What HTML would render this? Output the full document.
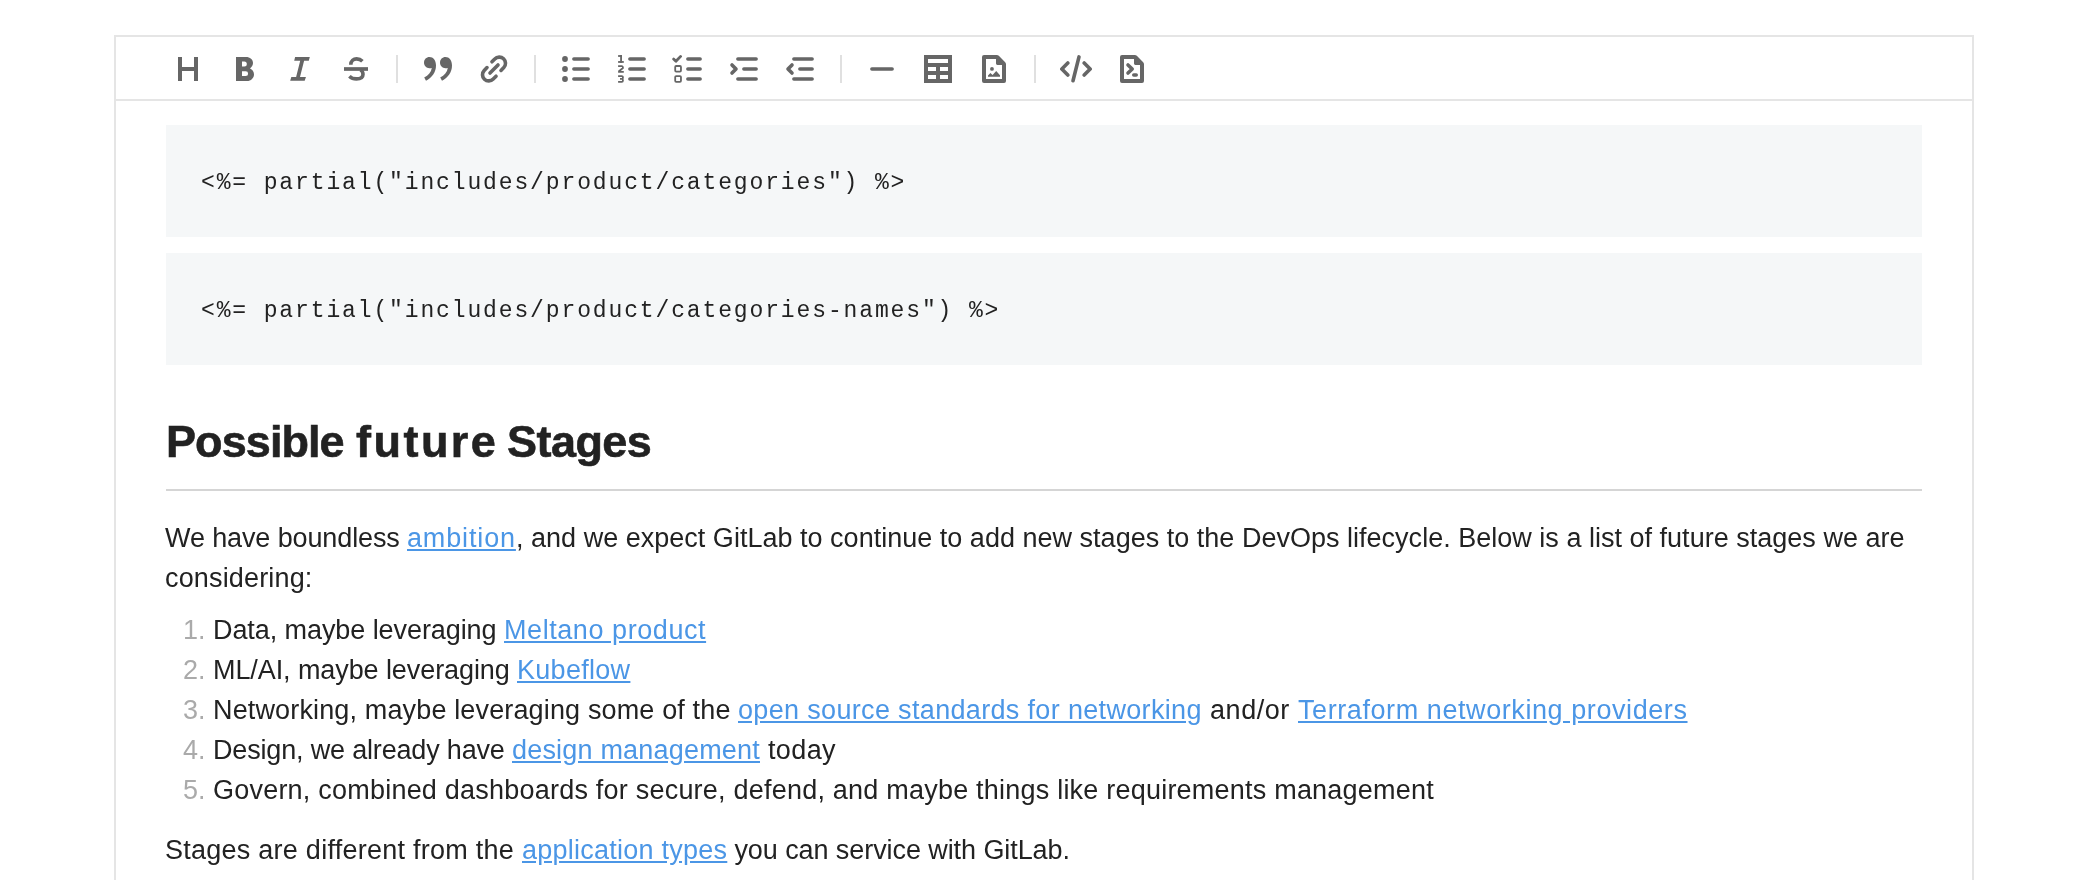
<!DOCTYPE html>
<html><head><meta charset="utf-8">
<style>
html,body{margin:0;padding:0;background:#fff;}
body{width:2083px;height:880px;overflow:hidden;position:relative;font-family:"Liberation Sans",sans-serif;}
.box{position:absolute;left:114px;top:35px;width:1860px;height:900px;box-sizing:border-box;border:2px solid #e5e5e5;}
.tbar{position:absolute;left:116px;top:99px;width:1856px;height:2px;background:#e5e5e5;}
.ic{position:absolute;top:53px;width:32px;height:32px;}
.ic svg{display:block;width:32px;height:32px;}
.dv{position:absolute;top:55px;width:2px;height:28px;background:#e0e0e0;}
.pre{position:absolute;left:166px;width:1756px;height:112px;background:#f5f7f8;}
.code{position:absolute;left:201px;font-family:"Liberation Mono",monospace;font-size:23px;letter-spacing:1.87px;line-height:40px;color:#222;white-space:pre;}
.t{position:absolute;white-space:pre;font-size:27px;line-height:40px;color:#222;}
.a{position:absolute;white-space:pre;font-size:27px;line-height:40px;color:#4b96e6;text-decoration:underline;}
.n{position:absolute;white-space:nowrap;font-size:27px;line-height:40px;color:#aaa;}
h2{position:absolute;margin:0;white-space:nowrap;font-size:45px;line-height:60px;font-weight:bold;color:#222;-webkit-text-stroke:0.6px #222;}
.t,.a,.n,.code,h2{will-change:transform;}
.hr{position:absolute;left:166px;top:489px;width:1756px;height:2px;background:#d5d5d5;}
</style></head><body>
<div class="box"></div>
<div class="tbar"></div>

<!-- toolbar icons -->
<div class="ic" style="left:172px"><svg viewBox="0 0 16 16" fill="#666"><path d="M3 2h2v5h6V2h2v12h-2V9H5v5H3z"/></svg></div>
<div class="ic" style="left:228px"><svg viewBox="0 0 16 16" fill="#666"><path fill-rule="evenodd" d="M4 2H9C11 2 12.5 3.2 12.5 5C12.5 6.1 11.9 7.1 11 7.7C12.2 8.2 13 9.3 13 10.6C13 12.5 11.5 14 9.5 14H4Z M7 4.3V6.8H8.15A1.25 1.25 0 0 0 8.15 4.3Z M7 9.15V11.55H8.85A1.2 1.2 0 0 0 8.85 9.15Z"/></svg></div>
<div class="ic" style="left:284px"><svg viewBox="0 0 16 16" fill="#666"><path d="M5.55 2H12.9L12.4 3.9H10.05L8 12.05H10.97L10.35 13.9H3.09L3.66 12.05H6.06L8.1 3.9H5.1Z"/></svg></div>
<div class="ic" style="left:340px"><svg viewBox="0 0 16 16" fill="none" stroke="#666" stroke-width="1.8"><path d="M2 8H14" stroke-width="1.85"/><path d="M5.4 5.9C5.4 3.9 6.8 2.95 8.3 2.95C9.6 2.95 10.5 3.4 11.2 4.1"/><path d="M10.2 8.5C11.2 9 11.5 9.8 11.5 10.6C11.5 12.1 10.2 12.95 8.2 12.95C6.8 12.95 5.5 12.4 4.7 11.6"/></svg></div>
<div class="dv" style="left:396px"></div>
<div class="ic" style="left:422px"><svg viewBox="0 0 16 16" fill="#666"><path d="M3.75 2C5.6 2 7 3.6 7 6.3C7 9.6 5 12.4 2 13.9L1.1 12.3C3.2 11.2 4.6 9.6 4.9 7.5C4.6 7.6 4.2 7.6 3.75 7.6C2.2 7.6 1 6.4 1 4.8C1 3.2 2.2 2 3.75 2Z"/><path transform="translate(8 0)" d="M3.75 2C5.6 2 7 3.6 7 6.3C7 9.6 5 12.4 2 13.9L1.1 12.3C3.2 11.2 4.6 9.6 4.9 7.5C4.6 7.6 4.2 7.6 3.75 7.6C2.2 7.6 1 6.4 1 4.8C1 3.2 2.2 2 3.75 2Z"/></svg></div>
<div class="ic" style="left:478px"><svg viewBox="0 0 16 16" fill="none" stroke="#666" stroke-width="1.8" stroke-linecap="round" stroke-linejoin="round"><path d="M6.98 4.42L8.38 3.02A3.11 3.11 0 0 1 12.9 7.3L11.5 8.7"/><path d="M9.02 11.58L7.62 12.98A3.11 3.11 0 0 1 3.1 8.7L4.5 7.3"/><path d="M6 10L10 6"/></svg></div>
<div class="dv" style="left:534px"></div>
<div class="ic" style="left:560px"><svg viewBox="0 0 16 16" fill="#666" stroke="#666" stroke-width="1.8" stroke-linecap="round"><circle cx="2.5" cy="3" r="1.45" stroke="none"/><circle cx="2.5" cy="8" r="1.45" stroke="none"/><circle cx="2.5" cy="13" r="1.45" stroke="none"/><path d="M6.95 3H14.05M6.95 8H14.05M6.95 13H14.05"/></svg></div>
<div class="ic" style="left:616px"><svg viewBox="0 0 16 16"><g fill="#666"><rect x="1.05" y="1.05" width="1.95" height="0.9"/><rect x="2.07" y="1.05" width="0.92" height="3.88"/><rect x="1.05" y="4.03" width="2.85" height="0.9"/></g><g fill="none" stroke="#666" stroke-width="0.9"><path d="M1.05 6.61H2.9A0.55 0.55 0 0 1 3.45 7.16V7.5L1.5 9.1V9.39H3.9"/><path d="M1.05 11.52H2.9A0.55 0.55 0 0 1 3.45 12.07V12.45A0.5 0.5 0 0 1 2.95 12.95H2M2.95 12.95A0.5 0.5 0 0 1 3.45 13.45V13.85A0.55 0.55 0 0 1 2.9 14.4H1.05"/></g><path d="M6.95 3H14.05M6.95 8H14.05M6.95 13H14.05" stroke="#666" stroke-width="1.8" stroke-linecap="round"/></svg></div>
<div class="ic" style="left:672px"><svg viewBox="0 0 16 16" fill="none" stroke="#666"><path d="M0.8 3.05L1.95 4.15L4.3 1.7" stroke-width="1.4" stroke-linecap="round" stroke-linejoin="round"/><rect x="1.6" y="6.51" width="2.88" height="2.78" rx="0.5" stroke-width="0.9"/><rect x="1.6" y="11.52" width="2.88" height="2.88" rx="0.5" stroke-width="0.9"/><path d="M7.95 3H14.05M7.95 8H14.05M7.95 13H14.05" stroke-width="1.8" stroke-linecap="round"/></svg></div>
<div class="ic" style="left:728px"><svg viewBox="0 0 16 16" fill="none" stroke="#666" stroke-width="1.8" stroke-linecap="round" stroke-linejoin="round"><path d="M4.95 3H14.05M7.95 8H14.05M4.95 13H14.05"/><path d="M2 6L4 8L2 10"/></svg></div>
<div class="ic" style="left:784px"><svg viewBox="0 0 16 16" fill="none" stroke="#666" stroke-width="1.8" stroke-linecap="round" stroke-linejoin="round"><path d="M4.95 3H14.05M7.95 8H14.05M4.95 13H14.05"/><path d="M4 6L2 8L4 10"/></svg></div>
<div class="dv" style="left:840px"></div>
<div class="ic" style="left:866px"><svg viewBox="0 0 16 16" fill="none" stroke="#666" stroke-width="1.8" stroke-linecap="round"><path d="M2.95 8H13.05"/></svg></div>
<div class="ic" style="left:922px"><svg viewBox="0 0 16 16" fill="#666"><path fill-rule="evenodd" d="M1 1H15V15H1Z M3 3V5H13V3Z M3 7V9H7V7Z M9 7V9H13V7Z M3 11V13H7V11Z M9 11V13H13V11Z"/></svg></div>
<div class="ic" style="left:978px"><svg viewBox="0 0 16 16" fill="#666"><path fill-rule="evenodd" d="M3 1H9.4A1.4 1.4 0 0 1 10.4 1.4L13.6 4.6A1.4 1.4 0 0 1 14 5.6V14A1 1 0 0 1 13 15H3A1 1 0 0 1 2 14V2A1 1 0 0 1 3 1Z M4 3V13H12V6H9.7A0.7 0.7 0 0 1 9 5.3V3Z"/><circle cx="6.98" cy="7.94" r="0.95"/><path d="M5 11.9V11.2L6.2 10L7.3 11L9.1 9L11 11.1V11.9Z"/></svg></div>
<div class="dv" style="left:1034px"></div>
<div class="ic" style="left:1060px"><svg viewBox="0 0 16 16" fill="none" stroke="#666" stroke-width="1.8" stroke-linecap="round" stroke-linejoin="round"><path d="M3.9 5L0.92 8L3.9 11"/><path d="M12.1 5L15.08 8L12.1 11"/><path d="M9.5 1.95L6.5 13.85"/></svg></div>
<div class="ic" style="left:1116px"><svg viewBox="0 0 16 16" fill="#666"><path fill-rule="evenodd" d="M3 1H9.4A1.4 1.4 0 0 1 10.4 1.4L13.6 4.6A1.4 1.4 0 0 1 14 5.6V14A1 1 0 0 1 13 15H3A1 1 0 0 1 2 14V2A1 1 0 0 1 3 1Z M4 3V13H12V6H9.7A0.7 0.7 0 0 1 9 5.3V3Z"/><path d="M6 6L8.1 8L6 10M8.9 11H10.1" fill="none" stroke="#666" stroke-width="1.8" stroke-linecap="round" stroke-linejoin="round"/></svg></div>

<!-- content -->
<div class="pre" style="top:125px"></div>
<div class="code" style="top:163px">&lt;%= partial("includes/product/categories") %&gt;</div>
<div class="pre" style="top:253px"></div>
<div class="code" style="top:291px">&lt;%= partial("includes/product/categories-names") %&gt;</div>

<h2 style="top:411.5px;left:166px;letter-spacing:-0.92px">Possible</h2><h2 style="top:411.5px;left:356px;letter-spacing:2.48px">future</h2><h2 style="top:411.5px;left:507px;letter-spacing:-0.55px">Stages</h2>
<div class="hr"></div>

<div class="t" style="left:165px;top:518px;letter-spacing:-0.115px">We have boundless </div>
<div class="a" style="left:407.1px;top:518px;letter-spacing:0.855px">ambition</div>
<div class="t" style="left:516.0px;top:518px;letter-spacing:0.015px">, and we expect GitLab to continue to add new stages to the DevOps lifecycle. Below is a list of future stages we are</div>
<div class="t" style="left:165px;top:558px;letter-spacing:0.159px">considering:</div>
<div class="t" style="left:213px;top:610px;letter-spacing:-0.077px">Data, maybe leveraging </div>
<div class="a" style="left:503.9px;top:610px;letter-spacing:0.565px">Meltano product</div>
<div class="t" style="left:213px;top:650px;letter-spacing:-0.086px">ML/AI, maybe leveraging </div>
<div class="a" style="left:517.1px;top:650px;letter-spacing:0.29px">Kubeflow</div>
<div class="t" style="left:213px;top:690px;letter-spacing:0.145px">Networking, maybe leveraging some of the </div>
<div class="a" style="left:738.2px;top:690px;letter-spacing:0.334px">open source standards for networking</div>
<div class="t" style="left:1202px;top:690px;letter-spacing:0.542px"> and/or </div>
<div class="a" style="left:1297.9px;top:690px;letter-spacing:0.579px">Terraform networking providers</div>
<div class="t" style="left:213px;top:730px;letter-spacing:-0.174px">Design, we already have </div>
<div class="a" style="left:512px;top:730px;letter-spacing:0.196px">design management</div>
<div class="t" style="left:760px;top:730px;letter-spacing:0.406px"> today</div>
<div class="t" style="left:213px;top:770px;letter-spacing:0.218px">Govern, combined dashboards for secure, defend, and maybe things like requirements management</div>
<div class="t" style="left:165px;top:830px;letter-spacing:0.253px">Stages are different from the </div>
<div class="a" style="left:521.8px;top:830px;letter-spacing:0.245px">application types</div>
<div class="t" style="left:727.1px;top:830px;letter-spacing:-0.078px"> you can service with GitLab.</div>
<div class="n" style="left:183px;top:610px">1.</div>
<div class="n" style="left:183px;top:650px">2.</div>
<div class="n" style="left:183px;top:690px">3.</div>
<div class="n" style="left:183px;top:730px">4.</div>
<div class="n" style="left:183px;top:770px">5.</div>
</body></html>
